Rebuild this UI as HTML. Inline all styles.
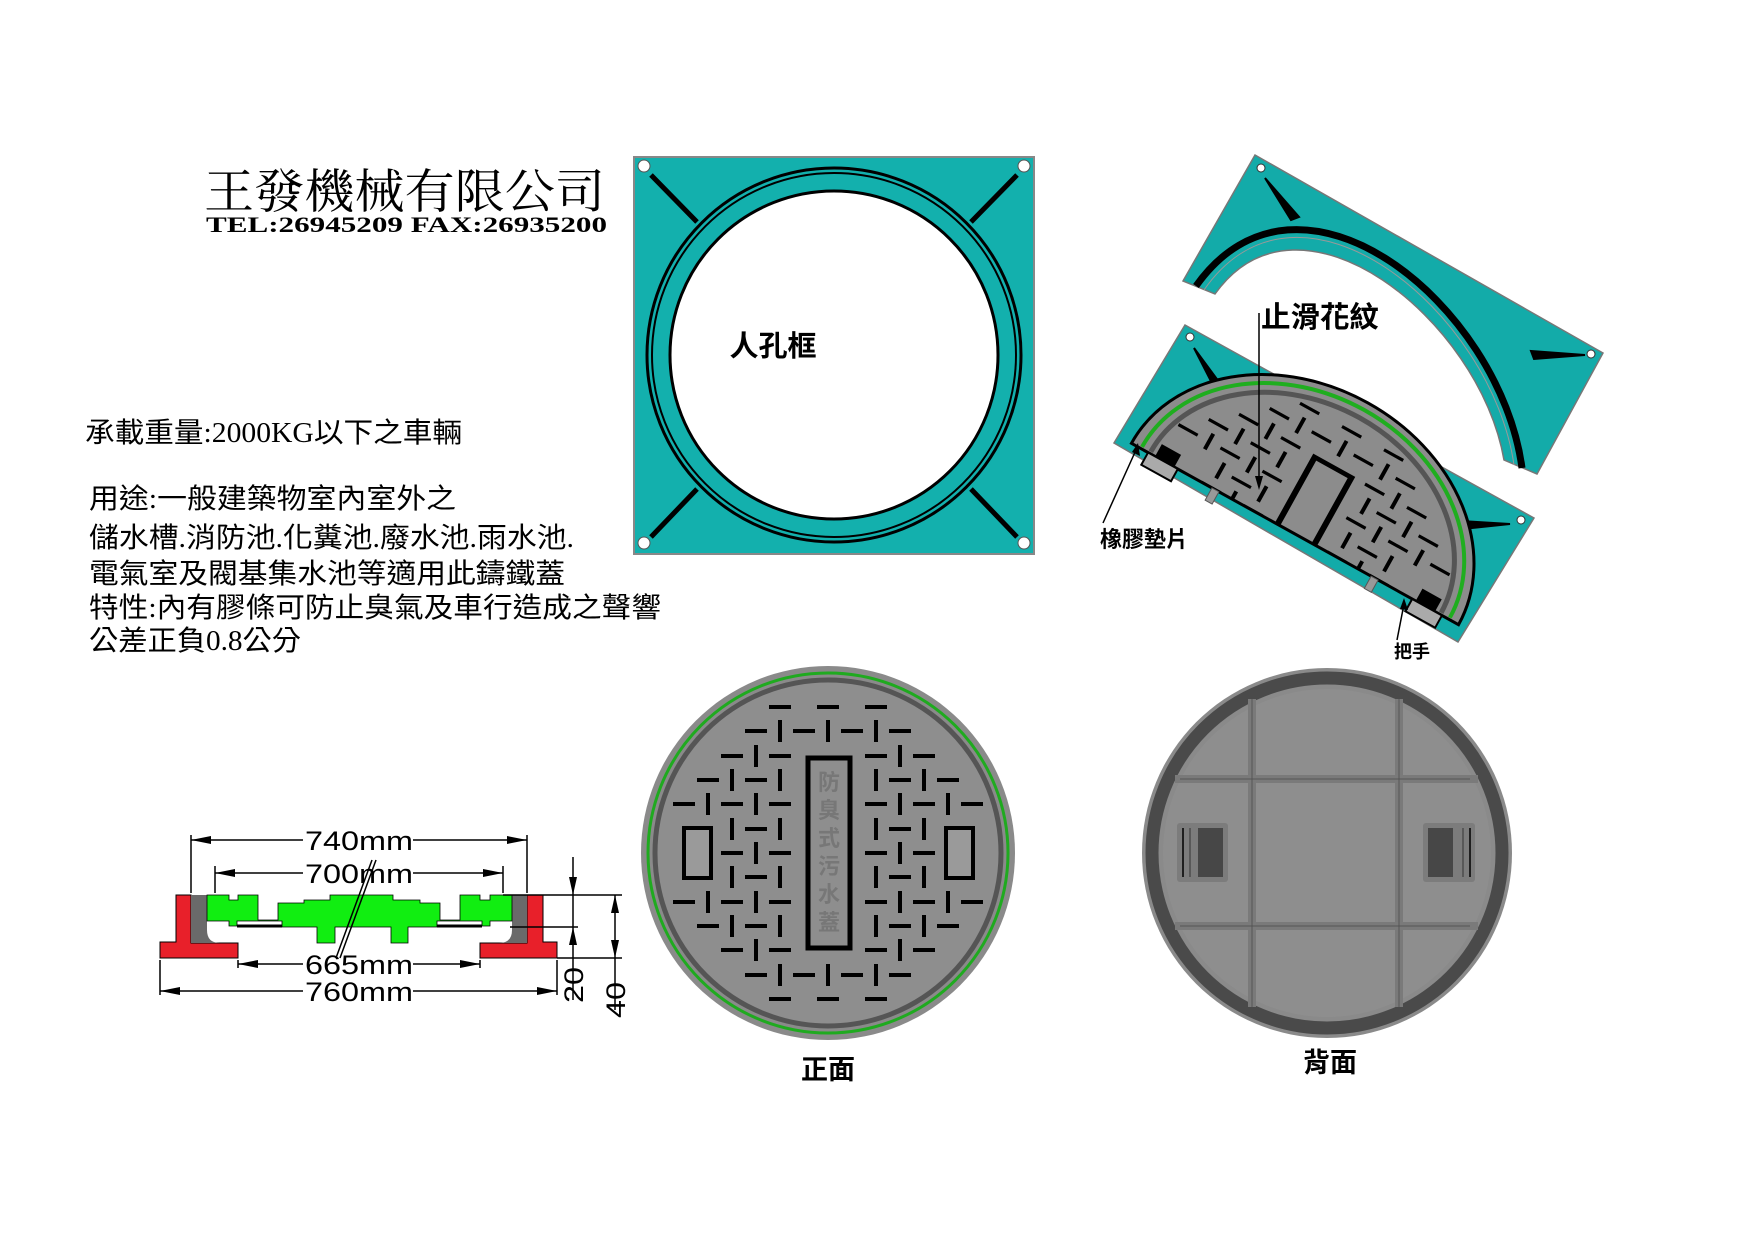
<!DOCTYPE html>
<html><head><meta charset="utf-8"><style>html,body{margin:0;padding:0;background:#fff}svg{display:block}</style></head>
<body>
<svg width="1755" height="1240" viewBox="0 0 1755 1240" xmlns="http://www.w3.org/2000/svg">
<defs>
<g id="weave" fill="none" stroke="#000" stroke-width="4">
<path d="M769 707h22M817 707h22M865 707h22
M745 731h22M793 731h22M841 731h22M889 731h22M780 720v22M828 720v22M876 720v22
M721 756h22M769 756h22M865 756h22M913 756h22M756 745v22M900 745v22
M697 780h22M745 780h22M889 780h22M937 780h22M732 769v22M780 769v22M876 769v22M924 769v22
M673 804h22M721 804h22M769 804h22M865 804h22M913 804h22M961 804h22M708 793v22M756 793v22M900 793v22M948 793v22
M745 829h22M889 829h22M732 818v22M780 818v22M876 818v22M924 818v22
M721 853h22M769 853h22M865 853h22M913 853h22M756 842v22M900 842v22
M745 877h22M889 877h22M732 866v22M780 866v22M876 866v22M924 866v22
M673 902h22M721 902h22M769 902h22M865 902h22M913 902h22M961 902h22M708 891v22M756 891v22M900 891v22M948 891v22
M697 926h22M745 926h22M889 926h22M937 926h22M732 915v22M780 915v22M876 915v22M924 915v22
M721 950h22M769 950h22M865 950h22M913 950h22M756 939v22M900 939v22
M745 975h22M793 975h22M841 975h22M889 975h22M780 964v22M828 964v22M876 964v22
M769 999h22M817 999h22M865 999h22"/>
</g>
<clipPath id="halfclip"><path d="M-187 0 A187 150 0 0 1 187 0 Z"/></clipPath>
</defs>

<!-- Title -->
<text x="204" y="208" font-family="'Liberation Serif','Noto Serif CJK SC','Noto Sans CJK TC',serif" font-size="47" textLength="401" lengthAdjust="spacingAndGlyphs">王發機械有限公司</text>
<text x="206" y="232" font-family="'Liberation Serif',serif" font-weight="bold" font-size="22" textLength="401" lengthAdjust="spacingAndGlyphs">TEL:26945209  FAX:26935200</text>

<!-- Left text -->
<g font-family="'Liberation Serif','Noto Sans CJK TC',sans-serif" font-size="28">
<text x="85" y="442" textLength="377" lengthAdjust="spacingAndGlyphs">承載重量:2000KG以下之車輛</text>
<text x="89" y="508" textLength="367" lengthAdjust="spacingAndGlyphs">用途:一般建築物室內室外之</text>
<text x="89" y="547" textLength="485" lengthAdjust="spacingAndGlyphs">儲水槽.消防池.化糞池.廢水池.雨水池.</text>
<text x="89" y="583" textLength="476" lengthAdjust="spacingAndGlyphs">電氣室及閥基集水池等適用此鑄鐵蓋</text>
<text x="89" y="617" textLength="572" lengthAdjust="spacingAndGlyphs">特性:內有膠條可防止臭氣及車行造成之聲響</text>
<text x="89" y="650" textLength="212" lengthAdjust="spacingAndGlyphs">公差正負0.8公分</text>
</g>

<!-- Square frame -->
<rect x="634" y="157" width="400" height="397" fill="#13b0ad" stroke="#888" stroke-width="2"/>
<g stroke="#000" stroke-width="5">
<line x1="651" y1="175" x2="697" y2="222"/><line x1="1017" y1="175" x2="971" y2="222"/>
<line x1="651" y1="537" x2="697" y2="489"/><line x1="1017" y1="537" x2="971" y2="489"/>
</g>
<g fill="#fff" stroke="#555" stroke-width="1"><circle cx="644" cy="166" r="6"/><circle cx="1024" cy="166" r="6"/><circle cx="644" cy="543" r="6"/><circle cx="1024" cy="543" r="6"/></g>
<circle cx="834" cy="355" r="187" fill="none" stroke="#000" stroke-width="3"/>
<circle cx="834" cy="355" r="182" fill="none" stroke="#000" stroke-width="2"/>
<circle cx="834" cy="355" r="164" fill="#fff" stroke="#000" stroke-width="3"/>
<text x="773" y="356" text-anchor="middle" font-family="'Liberation Sans','Noto Sans CJK TC',sans-serif" font-weight="bold" font-size="29">人孔框</text>

<!-- Isometric upper piece -->
<path d="M1255 155 L1603 353 L1537 474 L1504 460 C1480 320 1300 175 1215 294 L1183 281 Z" fill="#13aba9" stroke="#777" stroke-width="1.5"/>
<path d="M1522 468 C1500 305 1300 140 1196 286" fill="none" stroke="#000" stroke-width="7"/>
<path d="M1514 465 C1492 312 1300 152 1204 290" fill="none" stroke="#999" stroke-width="1"/>
<path d="M1265 178 L1299 217 L1291 220 Z" fill="#000" stroke="#000" stroke-width="2"/>
<path d="M1585 355 L1531 351 L1534 359 Z" fill="#000" stroke="#000" stroke-width="2"/>
<circle cx="1261" cy="168" r="4" fill="#fff" stroke="#333"/>
<circle cx="1591" cy="354" r="4" fill="#fff" stroke="#333"/>

<!-- Isometric lower piece -->
<path d="M1185 325 L1534 518 L1458 642 L1114 443 Z" fill="#13aba9" stroke="#777" stroke-width="1.5"/>
<circle cx="1190" cy="337" r="4" fill="#fff" stroke="#333"/>
<circle cx="1521" cy="520" r="4" fill="#fff" stroke="#333"/>
<path d="M1194 348 L1222 386 L1215 389 Z" fill="#000" stroke="#000" stroke-width="2"/>
<path d="M1510 524 L1460 521 L1462 529 Z" fill="#000" stroke="#000" stroke-width="2"/>
<g transform="translate(1295 534) rotate(29)">
<path d="M-187 0 A187 150 0 0 1 187 0 Z" fill="#8c8c8c" stroke="#000" stroke-width="3"/>
<path d="M-176 -2 A176 140 0 0 1 176 -2" fill="none" stroke="#1fae1f" stroke-width="4"/>
<path d="M-166 -2 A166 131 0 0 1 166 -2" fill="none" stroke="#555" stroke-width="5"/>
<g clip-path="url(#halfclip)">
<g transform="scale(1 0.8) translate(-828 -853)">
<use href="#weave"/>
<rect x="808" y="757" width="42" height="191" fill="none" stroke="#000" stroke-width="6"/>
</g>
</g>
<rect x="-160" y="-14" width="22" height="16" fill="#000"/>
<rect x="138" y="-14" width="22" height="16" fill="#000"/>
<rect x="-168" y="0" width="34" height="14" fill="#aaa" stroke="#000" stroke-width="2"/>
<rect x="134" y="0" width="34" height="14" fill="#aaa" stroke="#000" stroke-width="2"/>
<rect x="-95" y="0" width="8" height="14" fill="#999" stroke="#555"/>
<rect x="87" y="0" width="8" height="14" fill="#999" stroke="#555"/>
</g>
<!-- labels isometric -->
<g stroke="#000" stroke-width="1.5" fill="none">
<line x1="1259" y1="313" x2="1259" y2="478"/>
<line x1="1103" y1="523" x2="1136" y2="450"/>
<line x1="1397" y1="640" x2="1404" y2="604"/>
</g>
<path d="M1259 490 L1255 476 L1263 476 Z"/>
<path d="M1138 443 L1140 456 L1132 452 Z"/>
<path d="M1404 598 L1408 610 L1400 609 Z"/>
<g font-family="'Liberation Sans','Noto Sans CJK TC',sans-serif" font-weight="bold">
<text x="1261" y="327" font-size="29" textLength="118" lengthAdjust="spacingAndGlyphs">止滑花紋</text>
<text x="1100" y="547" font-size="22" textLength="88" lengthAdjust="spacingAndGlyphs">橡膠墊片</text>
<text x="1394" y="658" font-size="18">把手</text>
</g>

<!-- Front cover -->
<circle cx="828" cy="853" r="187" fill="#8a8a8a"/>
<circle cx="828" cy="853" r="180" fill="none" stroke="#1faa1f" stroke-width="3"/>
<circle cx="828" cy="853" r="173" fill="#8e8e8e" stroke="#555" stroke-width="5"/>
<use href="#weave"/>
<rect x="808" y="758" width="42" height="190" fill="none" stroke="#000" stroke-width="5"/>
<g font-family="'Liberation Sans','Noto Sans CJK TC',sans-serif" font-size="22" fill="#777" font-weight="bold" text-anchor="middle">
<text x="829" y="790">防</text><text x="829" y="818">臭</text><text x="829" y="846">式</text><text x="829" y="874">污</text><text x="829" y="902">水</text><text x="829" y="930">蓋</text>
</g>
<rect x="684" y="828" width="27" height="50" fill="#9a9a9a" stroke="#000" stroke-width="4"/>
<rect x="946" y="828" width="27" height="50" fill="#9a9a9a" stroke="#000" stroke-width="4"/>
<text x="828" y="1079" text-anchor="middle" font-family="'Liberation Sans','Noto Sans CJK TC',sans-serif" font-weight="bold" font-size="27">正面</text>

<!-- Back cover -->
<circle cx="1327" cy="853" r="185" fill="#8a8a8a"/>
<circle cx="1327" cy="853" r="175" fill="none" stroke="#4a4a4a" stroke-width="13"/>
<circle cx="1327" cy="853" r="168" fill="#8a8a8a"/>
<circle cx="1327" cy="853" r="164" fill="#8e8e8e"/>
<g stroke="#7a7a7a" stroke-width="8">
<line x1="1252" y1="699" x2="1252" y2="1007"/><line x1="1399" y1="699" x2="1399" y2="1007"/>
<line x1="1175" y1="779" x2="1478" y2="779"/><line x1="1175" y1="926" x2="1478" y2="926"/>
</g>
<g stroke="#555" stroke-width="1">
<line x1="1252" y1="699" x2="1252" y2="1007"/><line x1="1399" y1="699" x2="1399" y2="1007"/>
<line x1="1180" y1="779" x2="1470" y2="779"/><line x1="1180" y1="926" x2="1470" y2="926"/>
</g>
<rect x="1177" y="823" width="51" height="59" rx="3" fill="#7c7c7c"/>
<rect x="1198" y="828" width="25" height="49" fill="#474747"/>
<line x1="1183" y1="828" x2="1183" y2="877" stroke="#000" stroke-width="1.5"/>
<line x1="1190" y1="828" x2="1190" y2="877" stroke="#333" stroke-width="1"/>
<rect x="1423" y="823" width="52" height="59" rx="3" fill="#7c7c7c"/>
<rect x="1428" y="828" width="25" height="49" fill="#474747"/>
<line x1="1470" y1="828" x2="1470" y2="877" stroke="#000" stroke-width="1.5"/>
<line x1="1463" y1="828" x2="1463" y2="877" stroke="#333" stroke-width="1"/>
<text x="1330" y="1072" text-anchor="middle" font-family="'Liberation Sans','Noto Sans CJK TC',sans-serif" font-weight="bold" font-size="27">背面</text>

<!-- Cross section -->
<path d="M176 895 H191 V943 H238 V958 H160 V942 H176 Z" fill="#e8202a" stroke="#000" stroke-width="1"/>
<path d="M191 895 H207 V930 Q207 943 220 943 H238 V943 H191 Z" fill="#6a6a6a"/>
<path d="M543 895 H527 V943 H480 V958 H557 V942 H543 Z" fill="#e8202a" stroke="#000" stroke-width="1"/>
<path d="M527 895 H512 V930 Q512 943 499 943 H480 H527 Z" fill="#6a6a6a"/>
<path d="M207 895 H229 V900 H238 V895 H258 V920 H278 V903 H304 V900 H330 V895 H393 V900 H420 V903 H440 V920 H460 V895 H480 V900 H490 V895 H512 V921 H490 V926 H482 V921 H437 V927 H408 V943 H391 V927 H335 V943 H317 V927 H282 V921 H237 V926 H229 V921 H207 Z" fill="#11ee11" stroke="#000" stroke-width="0.8"/>
<path d="M237 926 H282 M437 926 H482" stroke="#000" stroke-width="3"/>
<g stroke="#000" stroke-width="1.5" fill="none">
<line x1="191" y1="835" x2="191" y2="893"/><line x1="527" y1="835" x2="527" y2="893"/>
<line x1="215" y1="866" x2="215" y2="893"/><line x1="503" y1="866" x2="503" y2="893"/>
<line x1="191" y1="840" x2="303" y2="840"/><line x1="413" y1="840" x2="527" y2="840"/>
<line x1="215" y1="873" x2="303" y2="873"/><line x1="413" y1="873" x2="503" y2="873"/>
<line x1="238" y1="960" x2="238" y2="968"/><line x1="480" y1="960" x2="480" y2="968"/>
<line x1="238" y1="964" x2="303" y2="964"/><line x1="413" y1="964" x2="480" y2="964"/>
<line x1="160" y1="960" x2="160" y2="995"/><line x1="557" y1="960" x2="557" y2="995"/>
<line x1="160" y1="991" x2="303" y2="991"/><line x1="413" y1="991" x2="557" y2="991"/>
<line x1="503" y1="895" x2="622" y2="895"/><line x1="510" y1="927" x2="578" y2="927"/><line x1="557" y1="958" x2="622" y2="958"/>
<line x1="573" y1="857" x2="573" y2="1000"/><line x1="615" y1="895" x2="615" y2="1010"/>
<line x1="372" y1="860" x2="336" y2="958"/><line x1="376" y1="860" x2="340" y2="958"/>
</g>
<g fill="#000">
<path d="M191 840 l20 -4 v8 Z"/><path d="M527 840 l-20 -4 v8 Z"/>
<path d="M215 873 l20 -4 v8 Z"/><path d="M503 873 l-20 -4 v8 Z"/>
<path d="M238 964 l20 -4 v8 Z"/><path d="M480 964 l-20 -4 v8 Z"/>
<path d="M160 991 l20 -4 v8 Z"/><path d="M557 991 l-20 -4 v8 Z"/>
<path d="M573 895 l-4 -18 h8 Z"/><path d="M573 927 l-4 18 h8 Z"/>
<path d="M615 895 l-4 18 h8 Z"/><path d="M615 958 l-4 -18 h8 Z"/>
</g>
<g font-family="'Liberation Sans',sans-serif" font-size="27">
<text x="305" y="850" textLength="108" lengthAdjust="spacingAndGlyphs">740mm</text>
<text x="305" y="883" textLength="108" lengthAdjust="spacingAndGlyphs">700mm</text>
<text x="305" y="974" textLength="108" lengthAdjust="spacingAndGlyphs">665mm</text>
<text x="305" y="1001" textLength="108" lengthAdjust="spacingAndGlyphs">760mm</text>
<text transform="translate(583 1003) rotate(-90)" textLength="36" lengthAdjust="spacingAndGlyphs">20</text>
<text transform="translate(625 1018) rotate(-90)" textLength="36" lengthAdjust="spacingAndGlyphs">40</text>
</g>
</svg>
</body></html>
